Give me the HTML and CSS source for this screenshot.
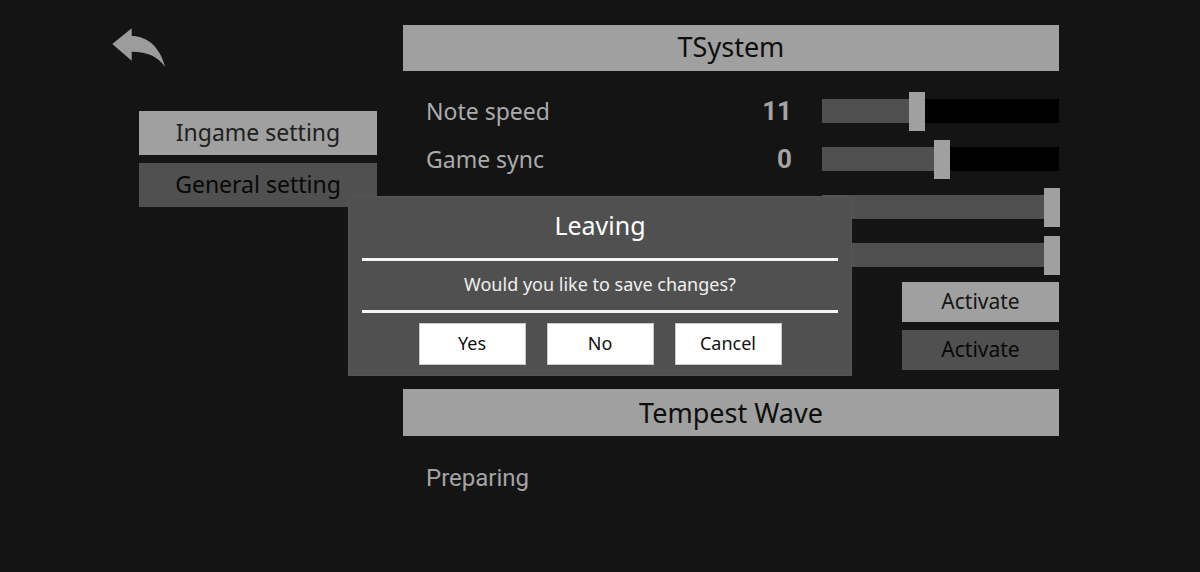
FILE: index.html
```html
<!DOCTYPE html>
<html lang="en">
<head>
<meta charset="utf-8">
<title>Settings</title>
<link rel="stylesheet" href="styles.css">
</head>
<body>
<div class="screen">
  <aside class="sidebar">
    <svg class="back" viewBox="0 0 57 42" width="57" height="42" aria-label="Back">
      <path d="M2.3 18 L21.7 2.3 L21.7 10 C36 10 50 20 55 40.7 C48 31 38 25.7 21.7 25.7 L21.7 34.7 Z" fill="#9c9c9c"/>
    </svg>
    <nav class="menu">
      <div class="menu-item active">Ingame setting</div>
      <div class="menu-item">General setting</div>
    </nav>
  </aside>

  <main class="content">
    <div class="section-head">TSystem</div>
    <div class="rows">
      <div class="row">
        <span class="label">Note speed</span>
        <span class="value">11</span>
        <div class="slider"><div class="fill" style="width:90px"></div><div class="thumb" style="left:87px"></div></div>
      </div>
      <div class="row">
        <span class="label">Game sync</span>
        <span class="value">0</span>
        <div class="slider"><div class="fill" style="width:115px"></div><div class="thumb" style="left:112px"></div></div>
      </div>
      <div class="row">
        <span class="label"></span>
        <span class="value"></span>
        <div class="slider"><div class="fill" style="width:237px"></div><div class="thumb" style="left:222px"></div></div>
      </div>
      <div class="row">
        <span class="label"></span>
        <span class="value"></span>
        <div class="slider"><div class="fill" style="width:237px"></div><div class="thumb" style="left:222px"></div></div>
      </div>
      <div class="row">
        <span class="label"></span>
        <span class="value"></span>
        <button class="toggle on">Activate</button>
      </div>
      <div class="row">
        <span class="label"></span>
        <span class="value"></span>
        <button class="toggle">Activate</button>
      </div>
    </div>

    <div class="section-head second">Tempest Wave</div>
    <div class="note">Preparing</div>
  </main>

  <div class="dialog">
    <div class="dialog-title">Leaving</div>
    <div class="dialog-line"></div>
    <div class="dialog-msg">Would you like to save changes?</div>
    <div class="dialog-line"></div>
    <div class="dialog-actions">
      <button class="dlg-btn">Yes</button>
      <button class="dlg-btn">No</button>
      <button class="dlg-btn">Cancel</button>
    </div>
  </div>
</div>
</body>
</html>
```

FILE: styles.css
```css
html, body {
  margin: 0;
  padding: 0;
  background: #141414;
}

body {
  font-family: "Noto Sans", "Open Sans", sans-serif;
}

.screen {
  position: relative;
  width: 1200px;
  height: 572px;
  overflow: hidden;
  display: flex;
  padding-left: 110px;
  box-sizing: border-box;
}

/* Sidebar */
.sidebar {
  width: 267px;
  padding-top: 26px;
  display: flex;
  flex-direction: column;
}

.back {
  display: block;
}

.menu {
  margin: 43px 0 0 29px;
  width: 238px;
  display: flex;
  flex-direction: column;
  gap: 8px;
}

.menu-item {
  height: 44px;
  box-sizing: border-box;
  padding-bottom: 2px;
  line-height: 42px;
  text-align: center;
  font-size: 23px;
  color: #080808;
  background: #505050;
}

.menu-item.active {
  background: #a0a0a0;
  color: #1e1e1e;
}

/* Content */
.content {
  margin-left: 26px;
  padding-top: 25px;
  width: 656px;
}

.section-head {
  height: 46px;
  box-sizing: border-box;
  padding-bottom: 3px;
  line-height: 43px;
  text-align: center;
  font-size: 27px;
  color: #0e0e0e;
  background: #a0a0a0;
}

.section-head.second {
  margin-top: 14px;
  height: 47px;
  padding-bottom: 0;
  line-height: 47px;
}

.rows {
  margin-top: 16px;
}

.row {
  height: 48px;
  display: grid;
  grid-template-columns: 1fr auto 237px;
  column-gap: 30px;
  align-items: center;
  padding-left: 23px;
}

.label {
  font-size: 23px;
  color: #ababab;
}

.value {
  font-family: Roboto, "Noto Sans", sans-serif;
  font-weight: 700;
  font-size: 26px;
  color: #a4a4a4;
  text-align: right;
}

.slider {
  position: relative;
  height: 24px;
  background: #000;
}

.fill {
  height: 100%;
  background: #505050;
}

.thumb {
  position: absolute;
  top: -7px;
  width: 16px;
  height: 39px;
  background: #a0a0a0;
}

.toggle {
  justify-self: end;
  width: 157px;
  height: 40px;
  margin-top: -2px;
  border: 0;
  padding: 0 0 2px;
  font-family: "Noto Sans", sans-serif;
  font-size: 21px;
  color: #080808;
  background: #505050;
}

.toggle.on {
  background: #a0a0a0;
  color: #151515;
}

.note {
  margin-top: 18px;
  padding-left: 23px;
  height: 48px;
  line-height: 48px;
  font-family: Roboto, "Noto Sans", sans-serif;
  font-size: 24px;
  color: #a4a4a4;
}

/* Dialog */
.dialog {
  position: absolute;
  left: 348px;
  top: 196px;
  width: 504px;
  height: 180px;
  box-sizing: border-box;
  padding: 0 13px;
  background: #505050;
  border: 1px solid #565656;
  display: flex;
  flex-direction: column;
}

.dialog-title {
  height: 61px;
  box-sizing: border-box;
  padding-bottom: 4px;
  line-height: 57px;
  text-align: center;
  font-size: 25px;
  color: #fff;
}

.dialog-line {
  height: 3px;
  background: #f4f4f4;
}

.dialog-msg {
  height: 49px;
  line-height: 47px;
  text-align: center;
  font-size: 18px;
  color: #f0f0f0;
}

.dialog-actions {
  display: flex;
  justify-content: center;
  gap: 21px;
  padding-top: 10px;
}

.dlg-btn {
  width: 107px;
  height: 42px;
  border: 1px solid #c8c8c8;
  padding: 0 0 2px;
  background: #fff;
  font-family: "Noto Sans", sans-serif;
  font-size: 18px;
  color: #111;
}
```
